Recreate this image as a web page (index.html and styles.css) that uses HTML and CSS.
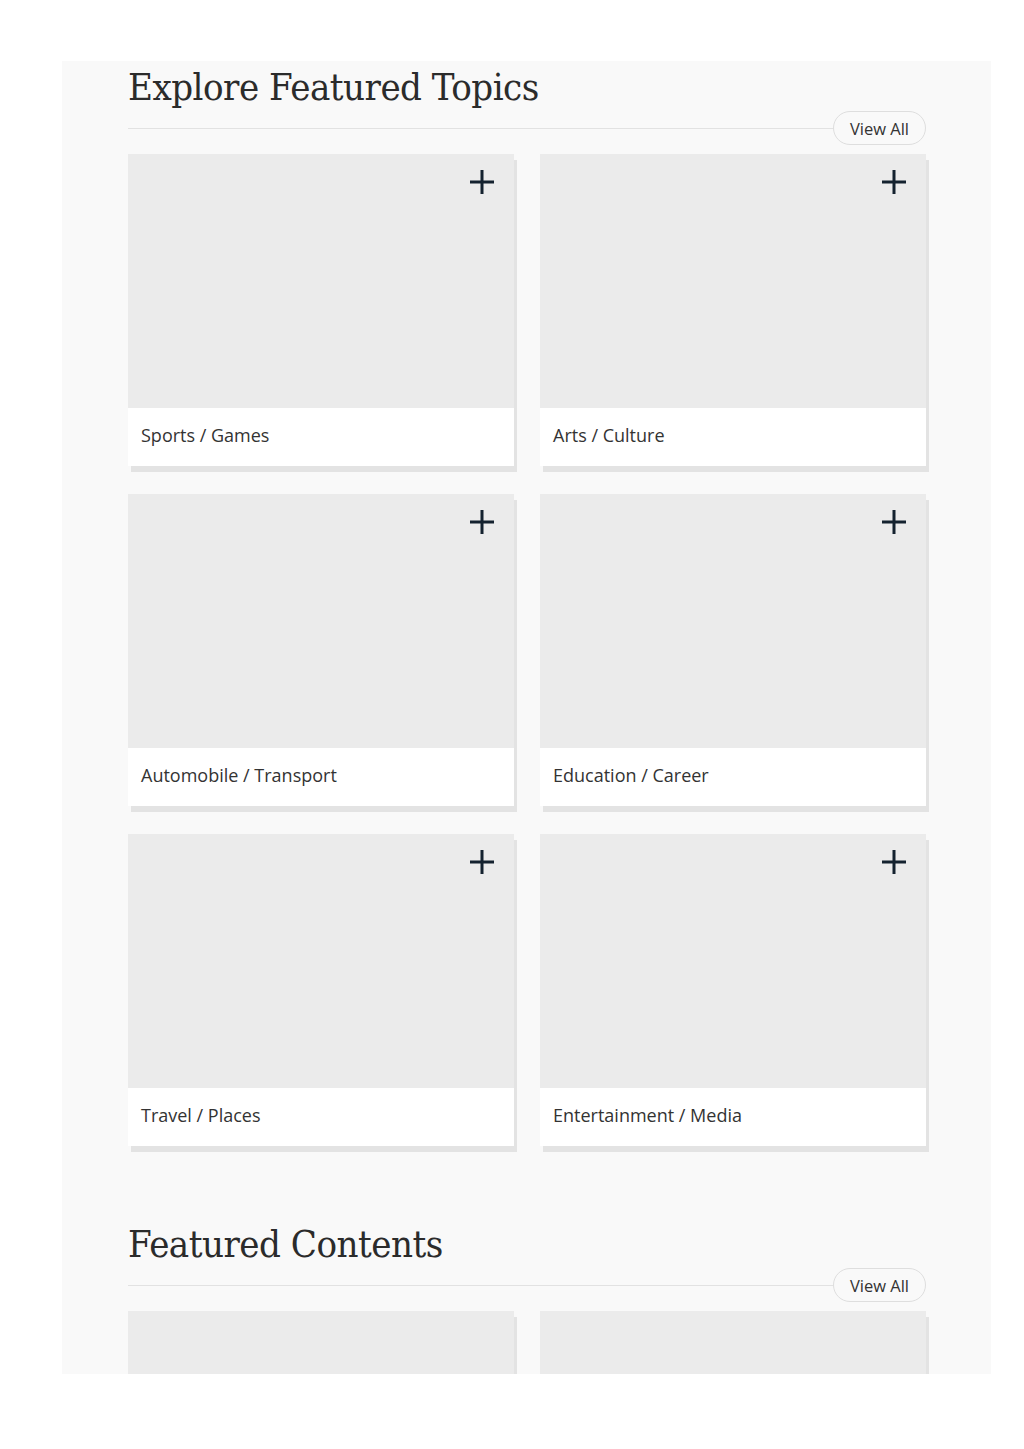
FILE: index.html
```html
<!DOCTYPE html>
<html lang="en">
<head>
    <meta charset="UTF-8">
    <meta name="viewport" content="width=device-width, initial-scale=1.0">
    <title>Featured Topics</title>
    <link rel="stylesheet" href="styles.css">
</head>
<body>
    <div class="panel">
        <!-- Topics -->
        <section class="section">
            <h2 class="section-title">Explore Featured Topics</h2>
            <div class="section-bar">
                <span class="rule"></span>
                <button class="view-all">View All</button>
            </div>
            <div class="card-grid">
                <div class="card">
                    <div class="card-image">
                        <svg class="plus" viewBox="0 0 24 24"><path d="M12 0V24M0 12H24"/></svg>
                    </div>
                    <div class="card-caption">Sports / Games</div>
                </div>
                <div class="card">
                    <div class="card-image">
                        <svg class="plus" viewBox="0 0 24 24"><path d="M12 0V24M0 12H24"/></svg>
                    </div>
                    <div class="card-caption">Arts / Culture</div>
                </div>
                <div class="card">
                    <div class="card-image">
                        <svg class="plus" viewBox="0 0 24 24"><path d="M12 0V24M0 12H24"/></svg>
                    </div>
                    <div class="card-caption">Automobile / Transport</div>
                </div>
                <div class="card">
                    <div class="card-image">
                        <svg class="plus" viewBox="0 0 24 24"><path d="M12 0V24M0 12H24"/></svg>
                    </div>
                    <div class="card-caption">Education / Career</div>
                </div>
                <div class="card">
                    <div class="card-image">
                        <svg class="plus" viewBox="0 0 24 24"><path d="M12 0V24M0 12H24"/></svg>
                    </div>
                    <div class="card-caption">Travel / Places</div>
                </div>
                <div class="card">
                    <div class="card-image">
                        <svg class="plus" viewBox="0 0 24 24"><path d="M12 0V24M0 12H24"/></svg>
                    </div>
                    <div class="card-caption">Entertainment / Media</div>
                </div>
            </div>
        </section>

        <!-- Contents -->
        <section class="section">
            <h2 class="section-title">Featured Contents</h2>
            <div class="section-bar">
                <span class="rule"></span>
                <button class="view-all">View All</button>
            </div>
            <div class="card-grid">
                <div class="card">
                    <div class="card-image"></div>
                    <div class="card-caption">&nbsp;</div>
                </div>
                <div class="card">
                    <div class="card-image"></div>
                    <div class="card-caption">&nbsp;</div>
                </div>
            </div>
        </section>
    </div>
</body>
</html>
```

FILE: styles.css
```css
/* General styling */
body {
    margin: 0;
    padding: 61px 0 0 62px;
    background: #fff;
    font-family: 'Open Sans', sans-serif;
    color: #333;
}
.panel {
    width: 798px;
    height: 1313px;
    padding: 0 65px 0 66px;
    background: #f9f9f9;
    overflow: hidden;
}
.section + .section {
    margin-top: 72px;
}
.section-title {
    margin: 0;
    padding-top: 4px;
    font-family: 'DejaVu Serif', serif;
    font-stretch: condensed;
    font-weight: normal;
    font-size: 38px;
    letter-spacing: -0.5px;
    line-height: 45px;
    color: #2b2b2b;
}
/* Rule with the button sitting on its right end */
.section-bar {
    display: flex;
    align-items: center;
    margin-top: 1px;
}
.rule {
    flex: 1;
    border-top: 1px solid #e2e2e2;
    margin-right: -1px;
}
.view-all {
    height: 34px;
    padding: 0 16px;
    border: 1px solid #dedede;
    border-radius: 17px;
    background: #f9f9f9;
    font-family: 'Open Sans', sans-serif;
    font-size: 16.5px;
    color: #333;
    cursor: pointer;
}
/* Cards */
.card-grid {
    display: grid;
    grid-template-columns: 386px 386px;
    column-gap: 26px;
    row-gap: 28px;
    margin-top: 9px;
}
.card {
    background: #fff;
    box-shadow: 3px 6px 0 #e3e3e3;
}
.card-image {
    position: relative;
    height: 254px;
    background: #ebebeb;
}
.plus {
    position: absolute;
    top: 16px;
    right: 20px;
    width: 24px;
    height: 24px;
    stroke: #14222f;
    stroke-width: 3;
    fill: none;
}
.card-caption {
    height: 54px;
    padding: 0 13px 4px;
    display: flex;
    align-items: center;
    font-size: 18px;
    color: #333;
}
```
